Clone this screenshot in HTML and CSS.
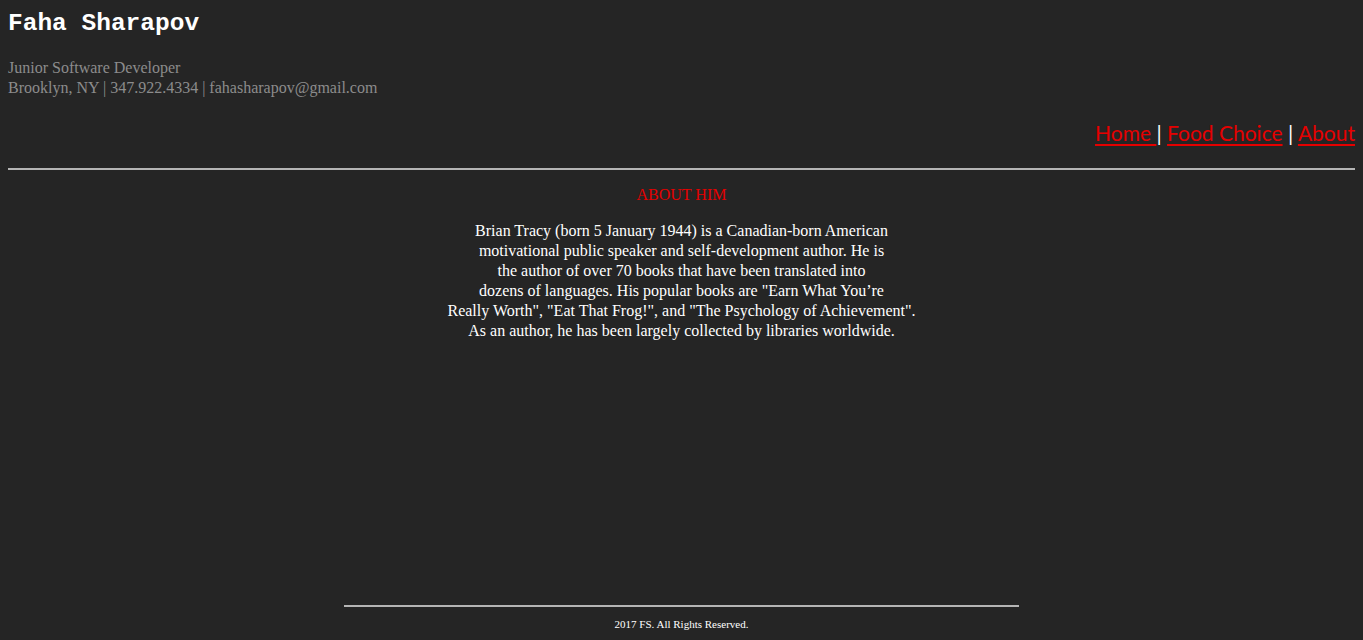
FILE: index.html
```html
<!DOCTYPE html>
<html>
<head>
<meta charset="utf-8">
<title>Faha Sharapov</title>
<link rel="stylesheet" href="styles.css">
</head>
<body>
<div class="page">
  <header class="header">
    <h1 class="name">Faha Sharapov</h1>
    <div class="info">
      <div>Junior Software Developer</div>
      <div>Brooklyn, NY | 347.922.4334 | fahasharapov@gmail.com</div>
    </div>
    <nav class="nav">
      <a href="#">Home </a><span class="sep">|</span> <a href="#">Food Choice</a> <span class="sep">|</span> <a href="#">About</a>
    </nav>
    <hr class="rule">
  </header>
  <main class="main">
    <h2 class="title">ABOUT HIM</h2>
    <p class="about">Brian Tracy (born 5 January 1944) is a Canadian-born American<br>motivational public speaker and self-development author. He is<br>the author of over 70 books that have been translated into<br>dozens of languages. His popular books are "Earn What You’re<br>Really Worth", "Eat That Frog!", and "The Psychology of Achievement".<br>As an author, he has been largely collected by libraries worldwide.</p>
  </main>
  <footer class="footer">
    <hr class="footer-rule">
    <p class="copy">2017 FS. All Rights Reserved.</p>
  </footer>
</div>
</body>
</html>
```

FILE: styles.css
```css
html, body {
  margin: 0;
  padding: 0;
  background: #252525;
}
body {
  font-family: "Liberation Serif", "Times New Roman", serif;
}
.page {
  min-height: 640px;
  box-sizing: border-box;
  padding: 0 8px;
  display: flex;
  flex-direction: column;
}
.name {
  margin: 10px 0 0;
  font-family: "Liberation Mono", "Courier New", monospace;
  font-size: 24.5px;
  line-height: 28px;
  font-weight: bold;
  color: #ffffff;
}
.info {
  margin-top: 20px;
  color: #8c8c8c;
  font-size: 16px;
  line-height: 20px;
}
.nav {
  margin-top: 20px;
  text-align: right;
  font-family: "Comic Sans MS", "Lato", "Open Sans", sans-serif;
  font-size: 21px;
  line-height: 30px;
  color: #ffffff;
}
.nav a {
  color: #e50000;
  text-decoration: underline;
  text-decoration-thickness: 2px;
  text-underline-offset: 3px;
}
.sep {
  color: #ffffff;
}
.rule {
  margin: 20px 0 0;
  border: 0;
  border-top: 2px solid #b5b5b5;
  height: 0;
}
.main {
  flex: 1;
  display: flex;
  flex-direction: column;
  align-items: center;
}
.title {
  margin: 15px 0 0;
  font-size: 16px;
  line-height: 20px;
  font-weight: normal;
  color: #e50000;
}
.about {
  margin: 16px 0 0;
  text-align: center;
  color: #ffffff;
  font-size: 16px;
  line-height: 20px;
}
.footer {
  display: flex;
  flex-direction: column;
  align-items: center;
  padding-bottom: 9px;
}
.footer-rule {
  width: calc(50% + 2px);
  margin: 0;
  border: 0;
  border-top: 2px solid #b5b5b5;
  height: 0;
}
.copy {
  margin: 10px 0 0;
  font-size: 11px;
  line-height: 14px;
  color: #ffffff;
}
```
